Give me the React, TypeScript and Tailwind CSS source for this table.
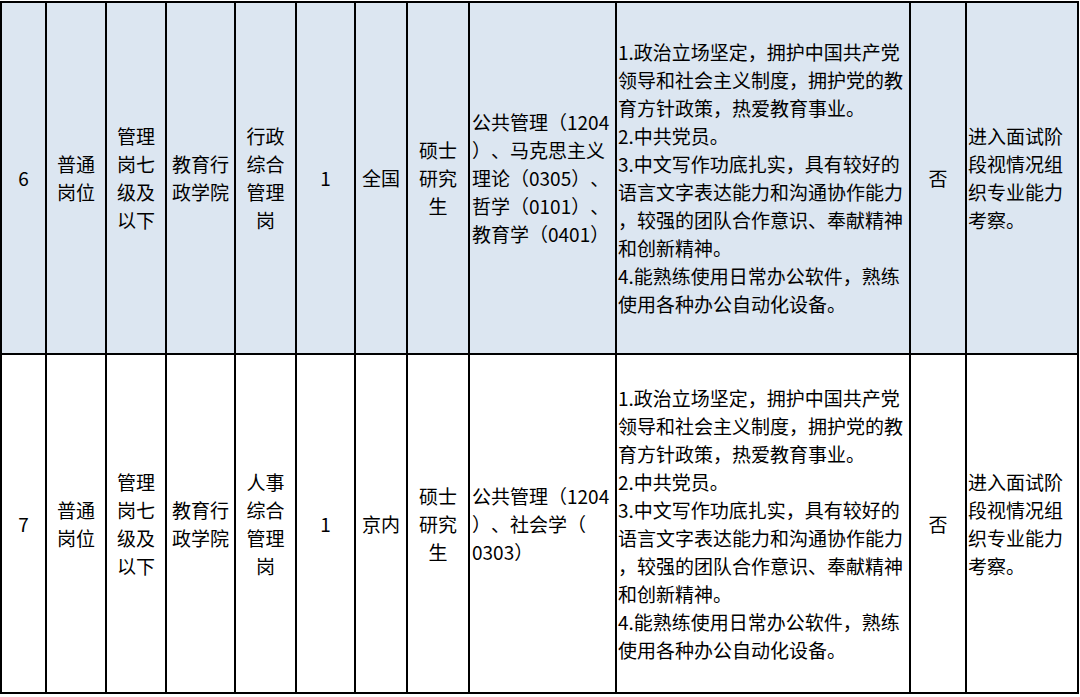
import React from 'react';

type Row = {
  no: string;
  type: string[];
  level: string[];
  dept: string[];
  post: string[];
  count: string;
  scope: string;
  edu: string[];
  major: string[];
  bg: string;
  height: string;
};

const requirements = [
  '1.政治立场坚定，拥护中国共产党',
  '领导和社会主义制度，拥护党的教',
  '育方针政策，热爱教育事业。',
  '2.中共党员。',
  '3.中文写作功底扎实，具有较好的',
  '语言文字表达能力和沟通协作能力',
  '，较强的团队合作意识、奉献精神',
  '和创新精神。',
  '4.能熟练使用日常办公软件，熟练',
  '使用各种办公自动化设备。',
];

const note = ['进入面试阶', '段视情况组', '织专业能力', '考察。'];

const rows: Row[] = [
  {
    no: '6',
    type: ['普通', '岗位'],
    level: ['管理', '岗七', '级及', '以下'],
    dept: ['教育行', '政学院'],
    post: ['行政', '综合', '管理', '岗'],
    count: '1',
    scope: '全国',
    edu: ['硕士', '研究', '生'],
    major: ['公共管理（1204', '）、马克思主义', '理论（0305）、', '哲学（0101）、', '教育学（0401）'],
    bg: 'bg-[#dce6f1]',
    height: 'h-[352px]',
  },
  {
    no: '7',
    type: ['普通', '岗位'],
    level: ['管理', '岗七', '级及', '以下'],
    dept: ['教育行', '政学院'],
    post: ['人事', '综合', '管理', '岗'],
    count: '1',
    scope: '京内',
    edu: ['硕士', '研究', '生'],
    major: ['公共管理（1204', '）、社会学（', '0303）'],
    bg: 'bg-white',
    height: 'h-[339px]',
  },
];

const Lines = ({ lines }: { lines: string[] }) => (
  <>
    {lines.map((l, i) => (
      <div key={i} className="whitespace-nowrap">
        {l}
      </div>
    ))}
  </>
);

const cell = 'border-2 border-black align-middle p-0';

const App = () => {
  return (
    <div className="w-[1080px] h-[697px] bg-white overflow-hidden">
      <table
        className="table-fixed border-collapse w-[1079px] mt-px text-black text-[19px] leading-[28px] [text-spacing-trim:space-all]"
        style={{ fontFamily: '"Noto Sans CJK SC", "Noto Sans", sans-serif' }}
      >
        <colgroup>
          <col className="w-[45px]" />
          <col className="w-[60px]" />
          <col className="w-[60px]" />
          <col className="w-[69px]" />
          <col className="w-[61px]" />
          <col className="w-[59px]" />
          <col className="w-[52px]" />
          <col className="w-[62px]" />
          <col className="w-[147px]" />
          <col className="w-[294px]" />
          <col className="w-[56px]" />
          <col className="w-[112px]" />
        </colgroup>
        <tbody>
          {rows.map((r) => (
            <tr key={r.no} className={`${r.bg} ${r.height}`}>
              <td className={`${cell} text-center`}>{r.no}</td>
              <td className={`${cell} text-center`}>
                <Lines lines={r.type} />
              </td>
              <td className={`${cell} text-center`}>
                <Lines lines={r.level} />
              </td>
              <td className={`${cell} text-center`}>
                <Lines lines={r.dept} />
              </td>
              <td className={`${cell} text-center`}>
                <Lines lines={r.post} />
              </td>
              <td className={`${cell} text-center`}>{r.count}</td>
              <td className={`${cell} text-center`}>{r.scope}</td>
              <td className={`${cell} text-center`}>
                <Lines lines={r.edu} />
              </td>
              <td className={`${cell} pl-[2px] text-left`}>
                <Lines lines={r.major} />
              </td>
              <td className={`${cell} pl-px text-left`}>
                <Lines lines={requirements} />
              </td>
              <td className={`${cell} text-center`}>否</td>
              <td className={`${cell} pl-px text-left`}>
                <Lines lines={note} />
              </td>
            </tr>
          ))}
        </tbody>
      </table>
    </div>
  );
};

export default App;
